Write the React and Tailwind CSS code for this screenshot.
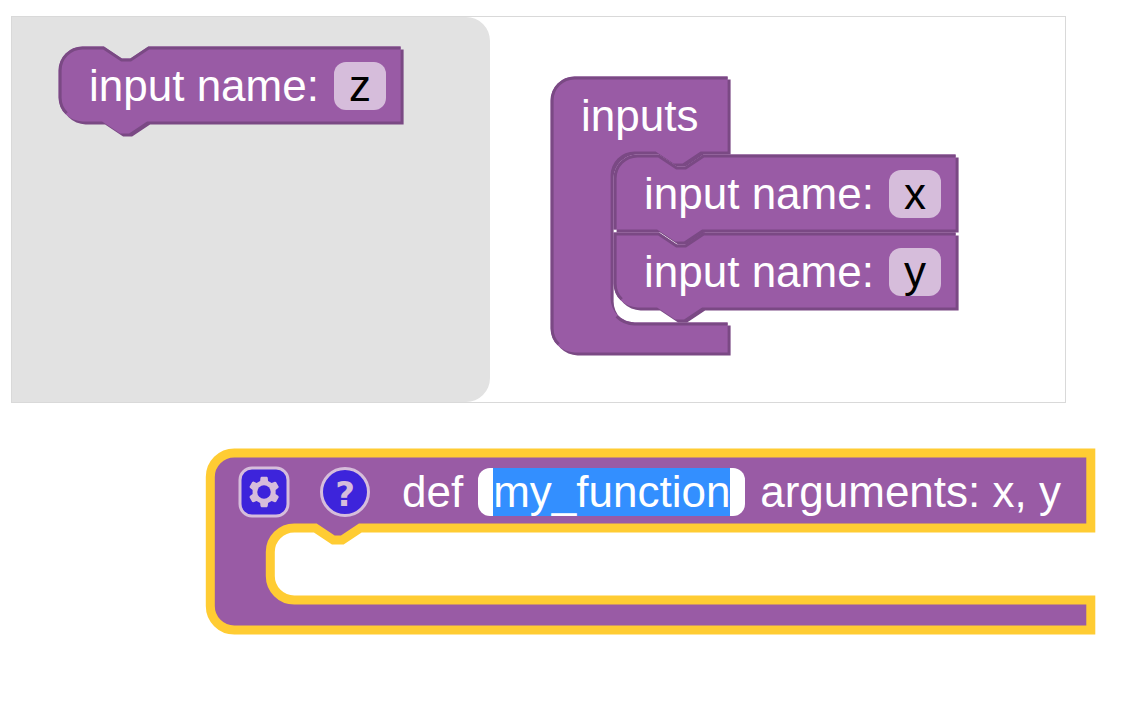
import { useEffect, useRef } from "react";

const FONT = "font-['Liberation_Sans',Arial,sans-serif] text-[44px] leading-[48px]";

// Block outlines are written in workspace units; one unit is three pixels.
const INPUT_END =
  "M0,8 A8,8 0 0,1 8,0 H15 l6,4 3,0 6,-4 H114 V25 H29.5 l-6,4 -3,0 -6,-4 H8 a8,8 0 0,1 -8,-8 z";
const INPUT_STACKED =
  "M0,8 A8,8 0 0,1 8,0 H15 l6,4 3,0 6,-4 H114 V25 H29.5 l-6,4 -3,0 -6,-4 H0 z";
const INPUT_SQUARE =
  "M0,0 H15 l6,4 3,0 6,-4 H114 V25 H29.5 l-6,4 -3,0 -6,-4 H8 a8,8 0 0,1 -8,-8 z";
const INPUT_END_LIGHT =
  "M2.7,22.3 A7.5,7.5 0 0,1 0.5,17 V8 A7.5,7.5 0 0,1 8,0.5 H15 l6,4 3,0 6,-4 H114";
const INPUT_STACKED_LIGHT =
  "M0.5,25 V8 A7.5,7.5 0 0,1 8,0.5 H15 l6,4 3,0 6,-4 H114";
const INPUT_SQUARE_LIGHT =
  "M2.7,22.3 A7.5,7.5 0 0,1 0.5,17 V0.5 H15 l6,4 3,0 6,-4 H114";
const CONTAINER =
  "M0,8 A8,8 0 0,1 8,0 H59 V25 H50 l-6,4 -3,0 -6,-4 H28 a8,8 0 0,0 -8,8 V74 a8,8 0 0,0 8,8 H59 V92 H8 a8,8 0 0,1 -8,-8 z";
const CONTAINER_LIGHT =
  "M2.7,89.3 A7.5,7.5 0 0,1 0.5,84 V8 A7.5,7.5 0 0,1 8,0.5 H59 M22,80 A8.5,8.5 0 0,0 28,82.5 H59";
const PROCEDURE =
  "M0,8 A8,8 0 0,1 8,0 H293.5 V25 H50 l-6,4 -3,0 -6,-4 H28 a8,8 0 0,0 -8,8 V41 a8,8 0 0,0 8,8 H293.5 V59 H8 a8,8 0 0,1 -8,-8 z";

function BlockShape({ path, light }) {
  return (
    <svg
      aria-hidden="true"
      width="342"
      height="75"
      className="pointer-events-none absolute top-0 left-0 overflow-visible"
    >
      <g transform="translate(-0.4 -0.6) scale(3)">
        <path d={path} transform="translate(1 1)" fill="#7a4984" />
        <path d={path} fill="#995ba5" />
        <path d={light} fill="none" stroke="#7a4984" strokeWidth="1" />
      </g>
    </svg>
  );
}

function InputBlock({ id, value, path, light }) {
  return (
    <div className="relative h-[75px] w-[342px]">
      <BlockShape path={path} light={light} />
      <div className="relative flex items-center gap-[15px] pt-[15px] pl-[30px]">
        <label htmlFor={id} className="whitespace-nowrap">
          input name:
        </label>
        <input
          id={id}
          defaultValue={value}
          className="h-12 w-[52px] rounded-xl bg-[#d6bddb] text-center text-black outline-none"
        />
      </div>
    </div>
  );
}

function GearIcon() {
  return (
    <svg width="48" height="48" viewBox="0 0 16 16" className="overflow-visible" aria-hidden="true">
      <rect width="16" height="16" rx="4" fill="#3d24db" stroke="#d6bddb" />
      <path
        fill="#d6bddb"
        d="m4.203,7.296 0,1.368 -0.92,0.677 -0.11,0.41 0.9,1.559 0.41,0.11 1.043,-0.457 1.187,0.683 0.127,1.134 0.3,0.3 1.8,0 0.3,-0.299 0.127,-1.138 1.185,-0.682 1.046,0.458 0.409,-0.11 0.9,-1.559 -0.11,-0.41 -0.92,-0.677 0,-1.366 0.92,-0.677 0.11,-0.41 -0.9,-1.559 -0.409,-0.109 -1.046,0.458 -1.185,-0.682 -0.127,-1.138 -0.3,-0.299 -1.8,0 -0.3,0.3 -0.126,1.135 -1.187,0.682 -1.043,-0.457 -0.41,0.11 -0.899,1.559 0.108,0.409z"
      />
      <circle cx="8" cy="8" r="2.25" fill="#3d24db" />
    </svg>
  );
}

function ProcedureBlock() {
  const nameField = useRef(null);
  useEffect(() => {
    nameField.current.focus();
    nameField.current.select();
  }, []);

  return (
    <div className="relative min-h-[177px] w-[881px]">
      <svg
        aria-hidden="true"
        width="881"
        height="177"
        className="pointer-events-none absolute top-0 left-0 overflow-visible"
      >
        <path
          d={PROCEDURE}
          transform="translate(0.3 0) scale(3)"
          fill="#995ba5"
          stroke="#fc3"
          strokeWidth="3"
        />
      </svg>
      <div className="relative flex items-center pt-[15px] pl-[30px]">
        <button type="button" aria-label="Edit inputs" className="mr-[33px] size-12 shrink-0">
          <GearIcon />
        </button>
        <button
          type="button"
          aria-label="Help"
          className="mr-[33px] flex size-12 shrink-0 items-center justify-center rounded-full bg-[#3d24db] pt-1 font-['DejaVu_Sans',sans-serif] text-[34px] font-bold text-[#d6bddb] outline-3 -outline-offset-2 outline-[#d6bddb]"
        >
          ?
        </button>
        <div className="flex items-center gap-[15px] whitespace-nowrap">
          <label htmlFor="function-name">def</label>
          <input
            id="function-name"
            ref={nameField}
            defaultValue="my_function"
            className="h-12 w-[267px] rounded-xl bg-white px-[15px] text-black outline-none selection:bg-[#338fff] selection:text-white"
          />
          <span>arguments: x, y</span>
        </div>
      </div>
    </div>
  );
}

export default function App() {
  return (
    <main className={`flex min-h-screen flex-col bg-white pt-4 text-white ${FONT}`}>
      <section className="mr-[62px] ml-[11px] flex min-h-[387px] border border-[#d9d9d9]">
        <aside className="w-[478px] shrink-0 rounded-r-3xl bg-[#e2e2e2] pt-[30px] pl-[47px]">
          <InputBlock id="input-z" value="z" path={INPUT_END} light={INPUT_END_LIGHT} />
        </aside>
        <div className="pt-[60px] pl-[61px]">
          <div className="relative h-[276px]">
            <BlockShape path={CONTAINER} light={CONTAINER_LIGHT} />
            <div className="relative pt-[15px]">
              <p className="pl-[30px]">inputs</p>
              <div className="flex flex-col gap-[3px] pt-[15px] pl-[63px]">
                <InputBlock
                  id="input-x"
                  value="x"
                  path={INPUT_STACKED}
                  light={INPUT_STACKED_LIGHT}
                />
                <InputBlock
                  id="input-y"
                  value="y"
                  path={INPUT_SQUARE}
                  light={INPUT_SQUARE_LIGHT}
                />
              </div>
            </div>
          </div>
        </div>
      </section>
      <section className="pt-[50px] pl-[210px]">
        <ProcedureBlock />
      </section>
    </main>
  );
}
